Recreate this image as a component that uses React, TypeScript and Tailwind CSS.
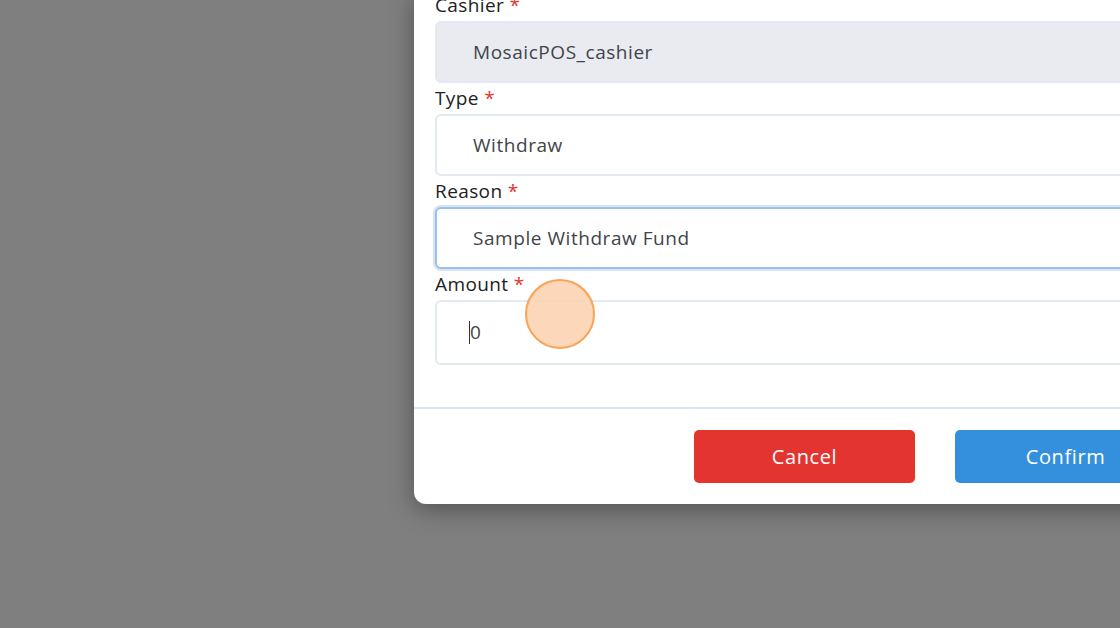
import React from "react";

const font = { fontFamily: '"Open Sans", "Liberation Sans", sans-serif' };

function Label({ text }: { text: string }) {
  return (
    <div className="h-[31px] text-[19px] leading-[31px] tracking-[0.4px] text-[#222]">
      {text} <span className="text-[#e3342f]">*</span>
    </div>
  );
}

export default function App() {
  return (
    <div
      className="relative w-[1120px] h-[628px] overflow-hidden bg-[#7f7f7f]"
      style={font}
    >
      <div className="pl-[414px] mt-[-10px]">
        <div className="w-[783px] bg-white rounded-b-[12px] shadow-[0_6px_24px_rgba(0,0,0,0.35)]">
          <div className="px-[21px] pb-[42px]">
            <Label text="Cashier" />
            <div className="h-[62px] rounded-[6px] border-2 border-[#e2e9f4] bg-[#e9ebf0] flex items-center pl-[36px] text-[19px] tracking-[0.55px] text-[#3f4448]">
              MosaicPOS_cashier
            </div>
            <Label text="Type" />
            <div className="h-[62px] rounded-[6px] border-2 border-[#e2e9f4] bg-white flex items-center pl-[36px] text-[19px] tracking-[0.55px] text-[#3f4448]">
              Withdraw
            </div>
            <Label text="Reason" />
            <div className="h-[62px] rounded-[6px] border-2 border-[#9cc0e6] ring-2 ring-[#d6e5f5] bg-white flex items-center pl-[36px] text-[19px] tracking-[0.55px] text-[#3f4448]">
              Sample Withdraw Fund
            </div>
            <Label text="Amount" />
            <div className="h-[65px] rounded-[6px] border-2 border-[#e2e9f4] bg-white flex items-center pl-[32px] text-[19px] text-[#3f4448]">
              <span className="inline-block w-[1px] h-[23px] bg-[#333] mr-[0px]" />
              <span>0</span>
            </div>
          </div>
          <div className="h-[2px] bg-[#d8e7f6]" />
          <div className="flex justify-end gap-[40px] px-[21px] pt-[21px] pb-[21px]">
            <button className="w-[221px] h-[53px] rounded-[5px] bg-[#e3342f] text-white text-[20px] tracking-[0.6px] font-medium">
              Cancel
            </button>
            <button className="w-[221px] h-[53px] rounded-[5px] bg-[#3490dc] text-white text-[20px] tracking-[0.6px] font-medium">
              Confirm
            </button>
          </div>
        </div>
      </div>
      <div className="absolute left-[525px] top-[279px] w-[70px] h-[70px] rounded-full border-2 border-[#f8a458] bg-[#fdd3b2]/90" />
    </div>
  );
}
